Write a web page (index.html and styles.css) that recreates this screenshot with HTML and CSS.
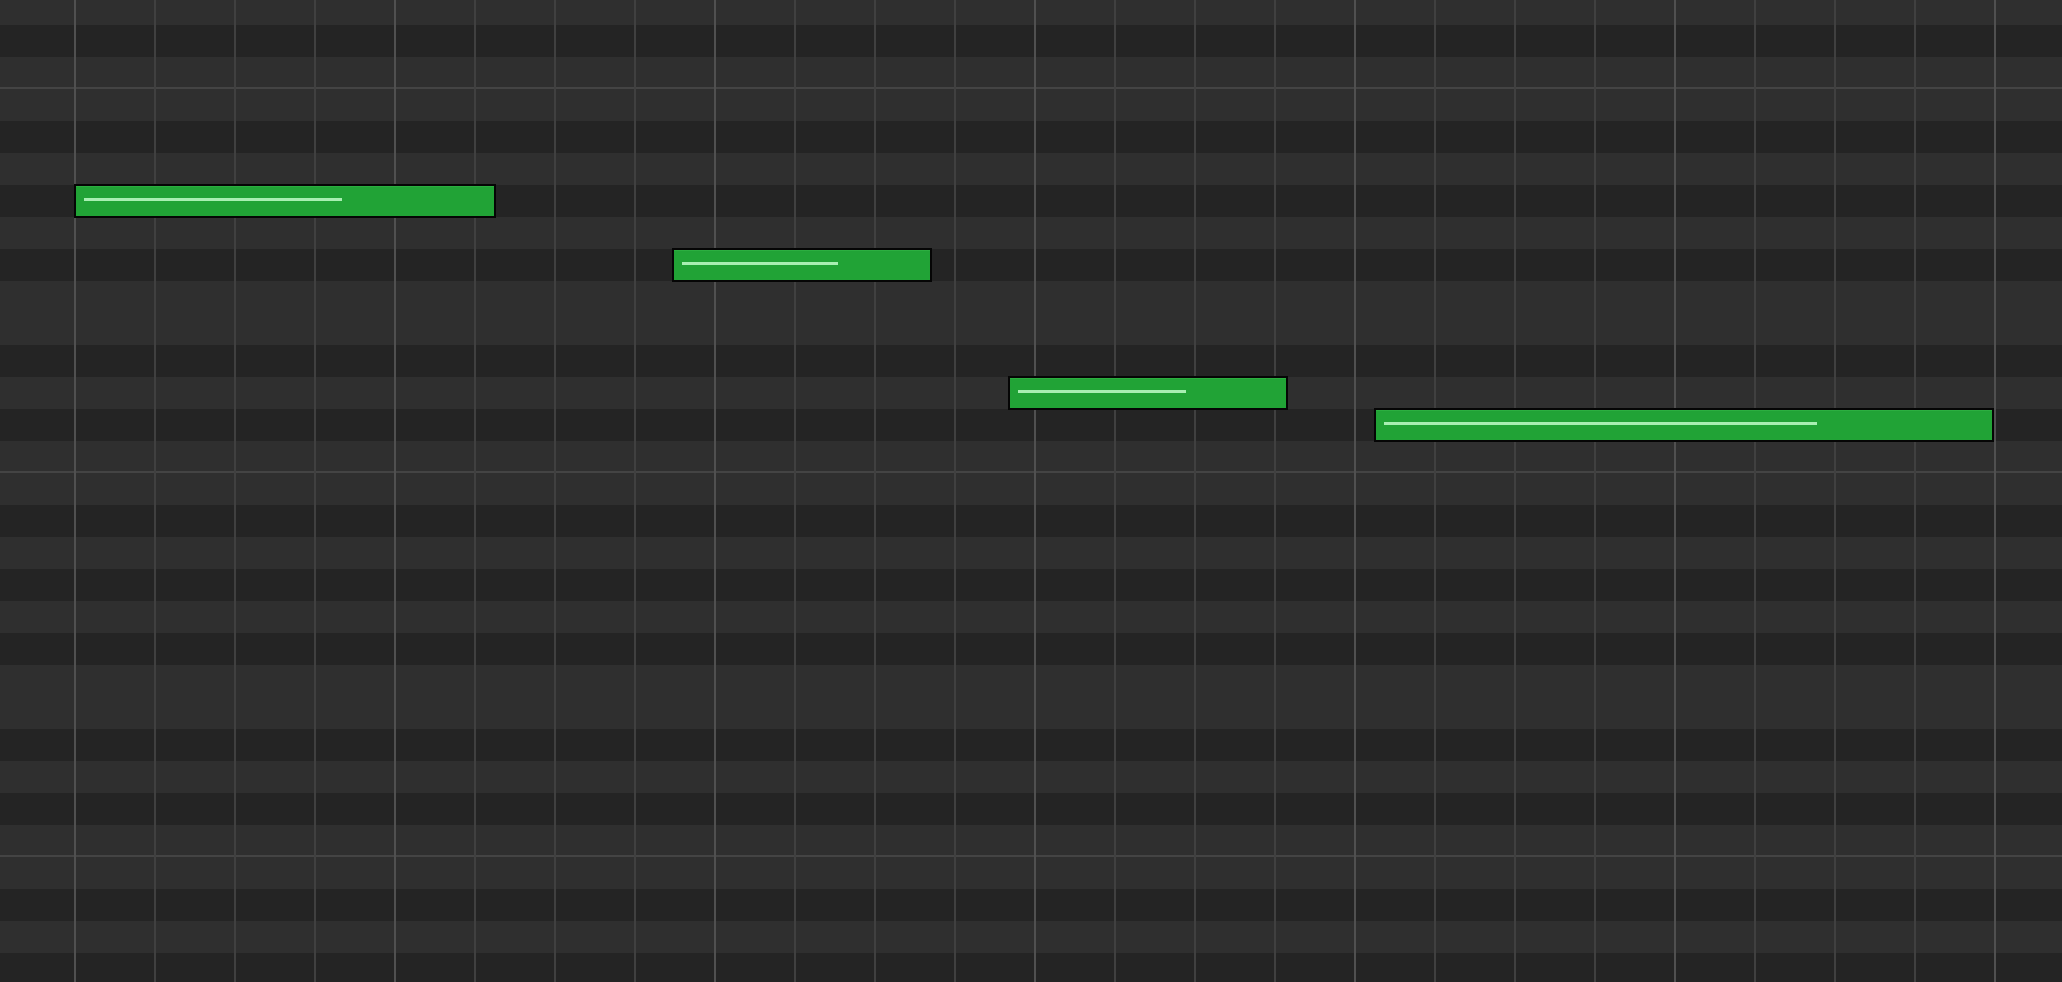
FILE: index.html
```html
<!DOCTYPE html>
<html lang="en">
<head>
<meta charset="utf-8">
<title>Piano Roll</title>
<link rel="stylesheet" href="styles.css">
</head>
<body>
<div class="roll">
  <div class="rows">
    <div class="row white"></div>
    <div class="row black"></div>
    <div class="row white c"></div>
    <div class="row white"></div>
    <div class="row black"></div>
    <div class="row white"></div>
    <div class="row black"></div>
    <div class="row white"></div>
    <div class="row black"></div>
    <div class="row white"></div>
    <div class="row white"></div>
    <div class="row black"></div>
    <div class="row white"></div>
    <div class="row black"></div>
    <div class="row white c"></div>
    <div class="row white"></div>
    <div class="row black"></div>
    <div class="row white"></div>
    <div class="row black"></div>
    <div class="row white"></div>
    <div class="row black"></div>
    <div class="row white"></div>
    <div class="row white"></div>
    <div class="row black"></div>
    <div class="row white"></div>
    <div class="row black"></div>
    <div class="row white c"></div>
    <div class="row white"></div>
    <div class="row black"></div>
    <div class="row white"></div>
    <div class="row black"></div>
  </div>
  <div class="cols">
    <div class="col bar"></div><div class="col"></div><div class="col"></div><div class="col"></div>
    <div class="col bar"></div><div class="col"></div><div class="col"></div><div class="col"></div>
    <div class="col bar"></div><div class="col"></div><div class="col"></div><div class="col"></div>
    <div class="col bar"></div><div class="col"></div><div class="col"></div><div class="col"></div>
    <div class="col bar"></div><div class="col"></div><div class="col"></div><div class="col"></div>
    <div class="col bar"></div><div class="col"></div><div class="col"></div><div class="col"></div>
    <div class="col bar"></div>
  </div>
  <div class="note" style="left:74px;top:184px;width:422px"><div class="vel" style="width:258px"></div></div>
  <div class="note" style="left:672px;top:248px;width:260px"><div class="vel" style="width:156px"></div></div>
  <div class="note" style="left:1008px;top:376px;width:280px"><div class="vel" style="width:168px"></div></div>
  <div class="note" style="left:1374px;top:408px;width:620px"><div class="vel" style="width:433px"></div></div>
</div>
</body>
</html>
```

FILE: styles.css
```css
html, body {
  margin: 0;
  padding: 0;
  background: #2f2f2f;
  font-family: "Liberation Sans", Arial, sans-serif;
}

.roll {
  position: relative;
  width: 2062px;
  height: 982px;
  overflow: hidden;
  background: #2f2f2f;
}

.rows {
  display: flex;
  flex-direction: column;
  margin-top: -7px;
}

.row {
  height: 32px;
  flex: 0 0 32px;
  box-sizing: border-box;
}

.row.white {
  background: #2f2f2f;
}

.row.black {
  background: #242424;
}

.row.c {
  box-shadow: inset 0 -2px 0 #444444;
}

.cols {
  position: absolute;
  inset: 0;
  display: flex;
  padding-left: 74px;
  pointer-events: none;
}

.col {
  flex: 0 0 80px;
  box-sizing: border-box;
  border-left: 2px solid #404040;
}

.col.bar {
  border-left-color: #505050;
}

.note {
  position: absolute;
  box-sizing: border-box;
  height: 34px;
  border: 2px solid #050505;
  background: #21a336;
  box-shadow: inset 0 1px 0 #2cae40;
  padding: 12px 8px 0;
}

.vel {
  height: 3px;
  background: #a8efb2;
}
```
